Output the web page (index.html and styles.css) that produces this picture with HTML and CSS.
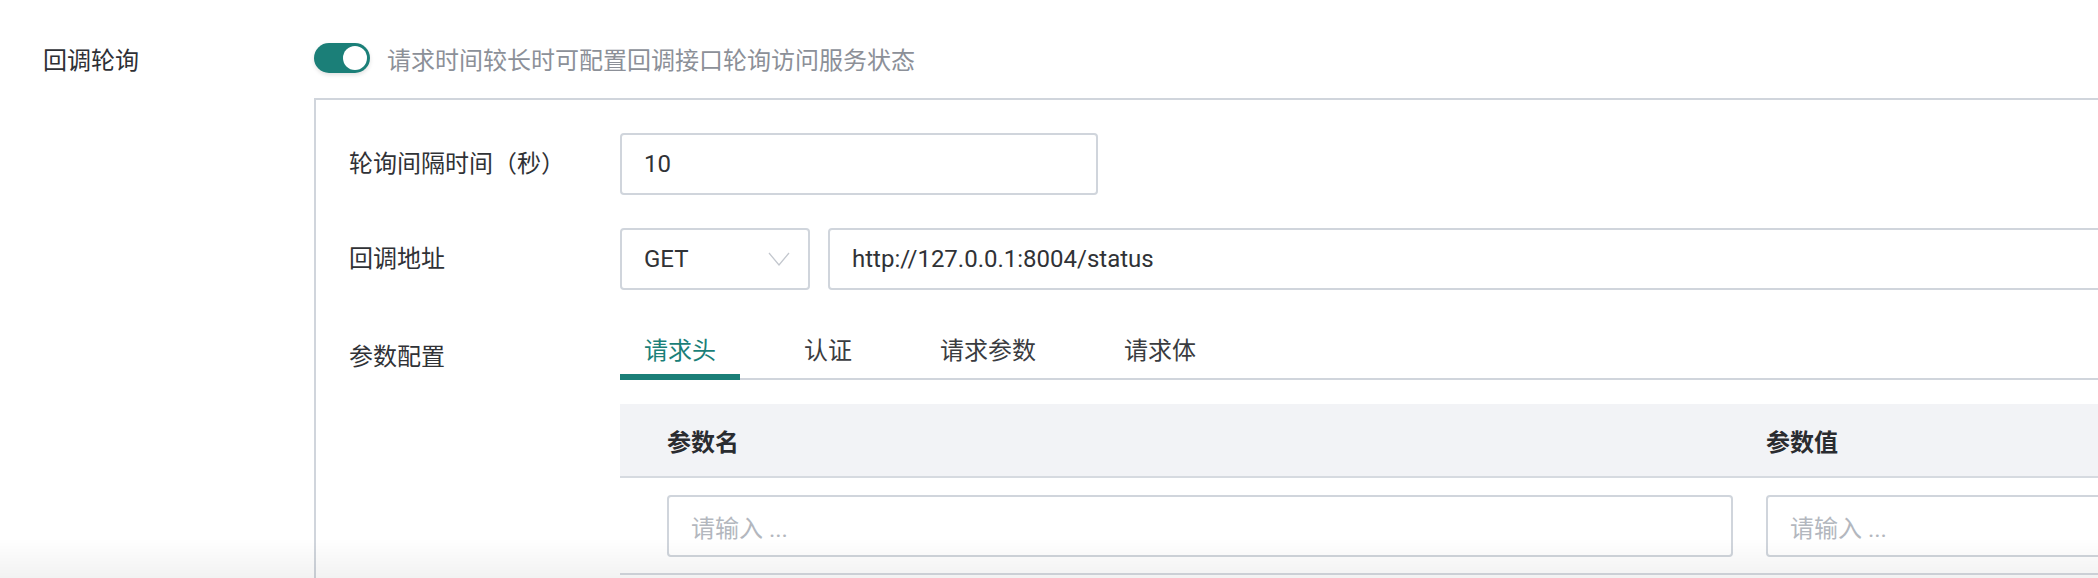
FILE: index.html
```html
<!DOCTYPE html>
<html lang="zh-CN">
<head>
<meta charset="utf-8">
<title>回调轮询</title>
<link rel="stylesheet" href="styles.css">
</head>
<body>
<div class="page">
  <div class="top-row">
    <div class="top-label">回调轮询</div>
    <div class="top-content">
      <span class="switch"><span class="knob"></span></span>
      <span class="desc">请求时间较长时可配置回调接口轮询访问服务状态</span>
    </div>
  </div>

  <div class="panel-row">
    <div class="panel">
      <div class="field">
        <div class="field-label">轮询间隔时间（秒）</div>
        <div class="field-body">
          <div class="input input-short">10</div>
        </div>
      </div>

      <div class="field">
        <div class="field-label">回调地址</div>
        <div class="field-body url-group">
          <div class="input select">
            <span>GET</span>
            <svg class="chevron" width="22" height="14" viewBox="0 0 22 14"><polyline points="1,1 11,13 21,1" fill="none" stroke="#c3c7ce" stroke-width="1.3"/></svg>
          </div>
          <div class="input url">http://127.0.0.1:8004/status</div>
        </div>
      </div>

      <div class="field">
        <div class="field-label label-tabs">参数配置</div>
        <div class="field-body">
          <div class="tabs">
            <div class="tab active">请求头</div>
            <div class="tab">认证</div>
            <div class="tab">请求参数</div>
            <div class="tab">请求体</div>
          </div>
          <div class="table">
            <div class="thead">
              <div class="cell c1">参数名</div>
              <div class="cell c2">参数值</div>
            </div>
            <div class="trow">
              <div class="cell c1"><div class="input ph">请输入 ...</div></div>
              <div class="cell c2"><div class="input ph">请输入 ...</div></div>
            </div>
          </div>
        </div>
      </div>
    </div>
  </div>
</div>
<div class="bottom-fade"></div>
</body>
</html>
```

FILE: styles.css
```css
html, body {
  margin: 0;
  padding: 0;
  background: #ffffff;
  overflow: hidden;
}

body {
  font-family: Roboto, "Noto Sans CJK SC", sans-serif;
  font-size: 24px;
  color: #303236;
}

.page {
  width: 2500px;
  padding-top: 40px;
}

.top-row {
  display: flex;
  align-items: center;
  height: 36px;
}

.top-label {
  width: 314px;
  padding-left: 43px;
  box-sizing: border-box;
  color: #2e3035;
}

.top-content {
  display: flex;
  align-items: center;
}

.switch {
  position: relative;
  display: block;
  width: 56px;
  height: 30px;
  border-radius: 15px;
  background: #1b7f78;
  box-shadow: 0 2px 4px rgba(0, 0, 0, 0.12);
}

.knob {
  position: absolute;
  right: 3px;
  top: 3px;
  width: 24px;
  height: 24px;
  border-radius: 50%;
  background: #ffffff;
}

.desc {
  margin-left: 17px;
  color: #8c9098;
}

.panel-row {
  display: flex;
  padding-left: 314px;
  margin-top: 22px;
}

.panel {
  flex: 1;
  border: 2px solid #d0d5dc;
  padding: 33px 0 0 33px;
  min-height: 600px;
}

.field {
  display: flex;
  margin-bottom: 33px;
}

.field-label {
  width: 271px;
  flex: none;
  height: 62px;
  line-height: 62px;
  color: #303236;
}

.label-tabs {
  padding-top: 3px;
}

.field-body {
  flex: 1;
  min-width: 0;
}

.input {
  box-sizing: border-box;
  height: 62px;
  border: 2px solid #d0d5dc;
  border-radius: 4px;
  padding: 0 22px;
  display: flex;
  align-items: center;
  color: #303236;
  background: #fff;
}

.input-short {
  width: 478px;
}

.url-group {
  display: flex;
  gap: 18px;
}

.select {
  width: 190px;
  flex: none;
  justify-content: space-between;
  padding-right: 18px;
}

.url {
  flex: 1;
}

.tabs {
  display: flex;
  height: 57px;
  border-bottom: 2px solid #d0d5dc;
  box-sizing: border-box;
}

.tab {
  position: relative;
  padding: 0 24px;
  margin-right: 40px;
  line-height: 57px;
  height: 55px;
  color: #3a3c40;
}

.tab.active {
  color: #1b7f78;
}

.tab.active::after {
  content: "";
  position: absolute;
  left: 0;
  right: 0;
  bottom: -2px;
  height: 6px;
  background: #1b7f78;
}

.table {
  margin-top: 24px;
}

.thead,
.trow {
  display: flex;
  padding-left: 47px;
  border-bottom: 2px solid #d6dae0;
}

.thead {
  height: 72px;
  align-items: center;
  background: #f2f3f6;
  font-weight: 600;
  color: #2a2c30;
}

.trow {
  padding-top: 17px;
  padding-bottom: 16px;
}

.cell.c1 {
  width: 1066px;
  flex: none;
}

.cell.c2 {
  margin-left: 33px;
  flex: 1;
}

.ph {
  color: #b3b7be;
}

.bottom-fade {
  position: fixed;
  left: 0;
  right: 0;
  bottom: 0;
  height: 40px;
  background: linear-gradient(to bottom, rgba(0, 0, 0, 0), rgba(0, 0, 0, 0.05));
  pointer-events: none;
}
```
